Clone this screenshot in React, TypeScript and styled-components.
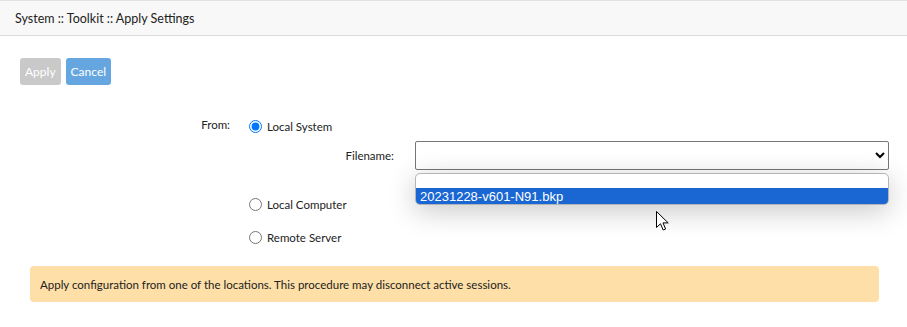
import React from "react";
import styled, { createGlobalStyle } from "styled-components";

const Global = createGlobalStyle`
  html, body { margin: 0; padding: 0; background: #fff; }
  body { font-family: "Lato", "Liberation Sans", sans-serif; font-size: 11.5px; color: #222; }
  * { box-sizing: border-box; }
`;

const Page = styled.div`
  position: relative;
  width: 907px;
  height: 327px;
  overflow: hidden;
`;

const Header = styled.div`
  height: 36px;
  background: #f8f8f8;
  border-top: 1px solid #e2e2e2;
  border-bottom: 1px solid #dcdcdc;
  display: flex;
  align-items: center;
  padding-left: 15px;
  font-size: 12.5px;
  color: #222;
`;

const Toolbar = styled.div`
  display: flex;
  gap: 5px;
  padding: 22px 0 0 20px;
`;

const Button = styled.button<{ $variant: "disabled" | "primary" }>`
  height: 27px;
  padding: 0 5px;
  border: none;
  border-radius: 3px;
  font-family: inherit;
  font-size: 12px;
  color: #fff;
  background: ${(p) => (p.$variant === "primary" ? "#66a6e0" : "#c9c9c9")};
`;

const Form = styled.div`
  display: flex;
  flex-direction: column;
  padding-top: 33px;
`;

const Row = styled.div`
  display: flex;
  align-items: flex-start;
`;

const Label = styled.div<{ $w: number }>`
  width: ${(p) => p.$w}px;
  text-align: right;
  flex: none;
`;

const Options = styled.div`
  display: flex;
  flex-direction: column;
  flex: 1;
  margin-left: 19px;
`;

const RadioLabel = styled.label<{ $mt: number }>`
  display: flex;
  align-items: center;
  gap: 5px;
  height: 16px;
  margin-top: ${(p) => p.$mt}px;
  input {
    margin: 0;
    width: 13px;
    height: 13px;
    accent-color: #0075ff;
  }
`;

const FileRow = styled.div`
  display: flex;
  align-items: center;
  margin-top: 7px;
  margin-right: 18px;
`;

const Select = styled.select`
  flex: 1;
  margin-left: 21px;
  height: 29px;
  border: 1px solid #767676;
  border-radius: 2px;
  background: #fff;
  font-family: inherit;
  font-size: 12px;
`;

const Alert = styled.div`
  margin: 21px 28px 0 30px;
  height: 36px;
  display: flex;
  align-items: center;
  padding-left: 10px;
  background: #fddfa7;
  border-radius: 4px;
  color: #222;
`;

const Popup = styled.div`
  position: absolute;
  left: 415px;
  top: 173px;
  width: 474px;
  height: 32px;
  background: #fff;
  border: 1px solid #b5b5b5;
  border-radius: 5px;
  overflow: hidden;
  box-shadow: 0 6px 28px rgba(0, 0, 0, 0.22);
  display: flex;
  flex-direction: column;
  padding-top: 14px;
`;

const Option = styled.div<{ $selected?: boolean }>`
  height: 16px;
  display: flex;
  align-items: center;
  padding-left: 4px;
  font-family: "Liberation Sans", sans-serif;
  font-size: 13px;
  color: ${(p) => (p.$selected ? "#fff" : "#000")};
  background: ${(p) => (p.$selected ? "#1a67d3" : "#fff")};
`;

const Cursor = styled.svg`
  position: absolute;
  left: 656px;
  top: 211px;
`;

export default function App() {
  return (
    <Page>
      <Global />
      <Header>System :: Toolkit :: Apply Settings</Header>
      <Toolbar>
        <Button $variant="disabled">Apply</Button>
        <Button $variant="primary">Cancel</Button>
      </Toolbar>
      <Form>
        <Row>
          <Label $w={230}>From:</Label>
          <Options>
            <RadioLabel $mt={0}>
              <input type="radio" name="src" defaultChecked />
              Local System
            </RadioLabel>
            <FileRow>
              <Label $w={145}>Filename:</Label>
              <Select defaultValue="">
                <option value=""></option>
                <option value="f">20231228-v601-N91.bkp</option>
              </Select>
            </FileRow>
            <RadioLabel $mt={26}>
              <input type="radio" name="src" />
              Local Computer
            </RadioLabel>
            <RadioLabel $mt={17}>
              <input type="radio" name="src" />
              Remote Server
            </RadioLabel>
          </Options>
        </Row>
      </Form>
      <Alert>
        Apply configuration from one of the locations. This procedure may disconnect active sessions.
      </Alert>
      <Popup>
        <Option $selected>20231228-v601-N91.bkp</Option>
      </Popup>
      <Cursor width="13" height="21" viewBox="0 0 13 21">
        <path d="M0.5 0.5 L0.5 16.5 L4.5 12.8 L7.2 19 L9.6 18 L7 11.9 L12.2 11.9 Z" fill="#fff" stroke="#000" strokeWidth="1" strokeLinejoin="round" />
      </Cursor>
    </Page>
  );
}
